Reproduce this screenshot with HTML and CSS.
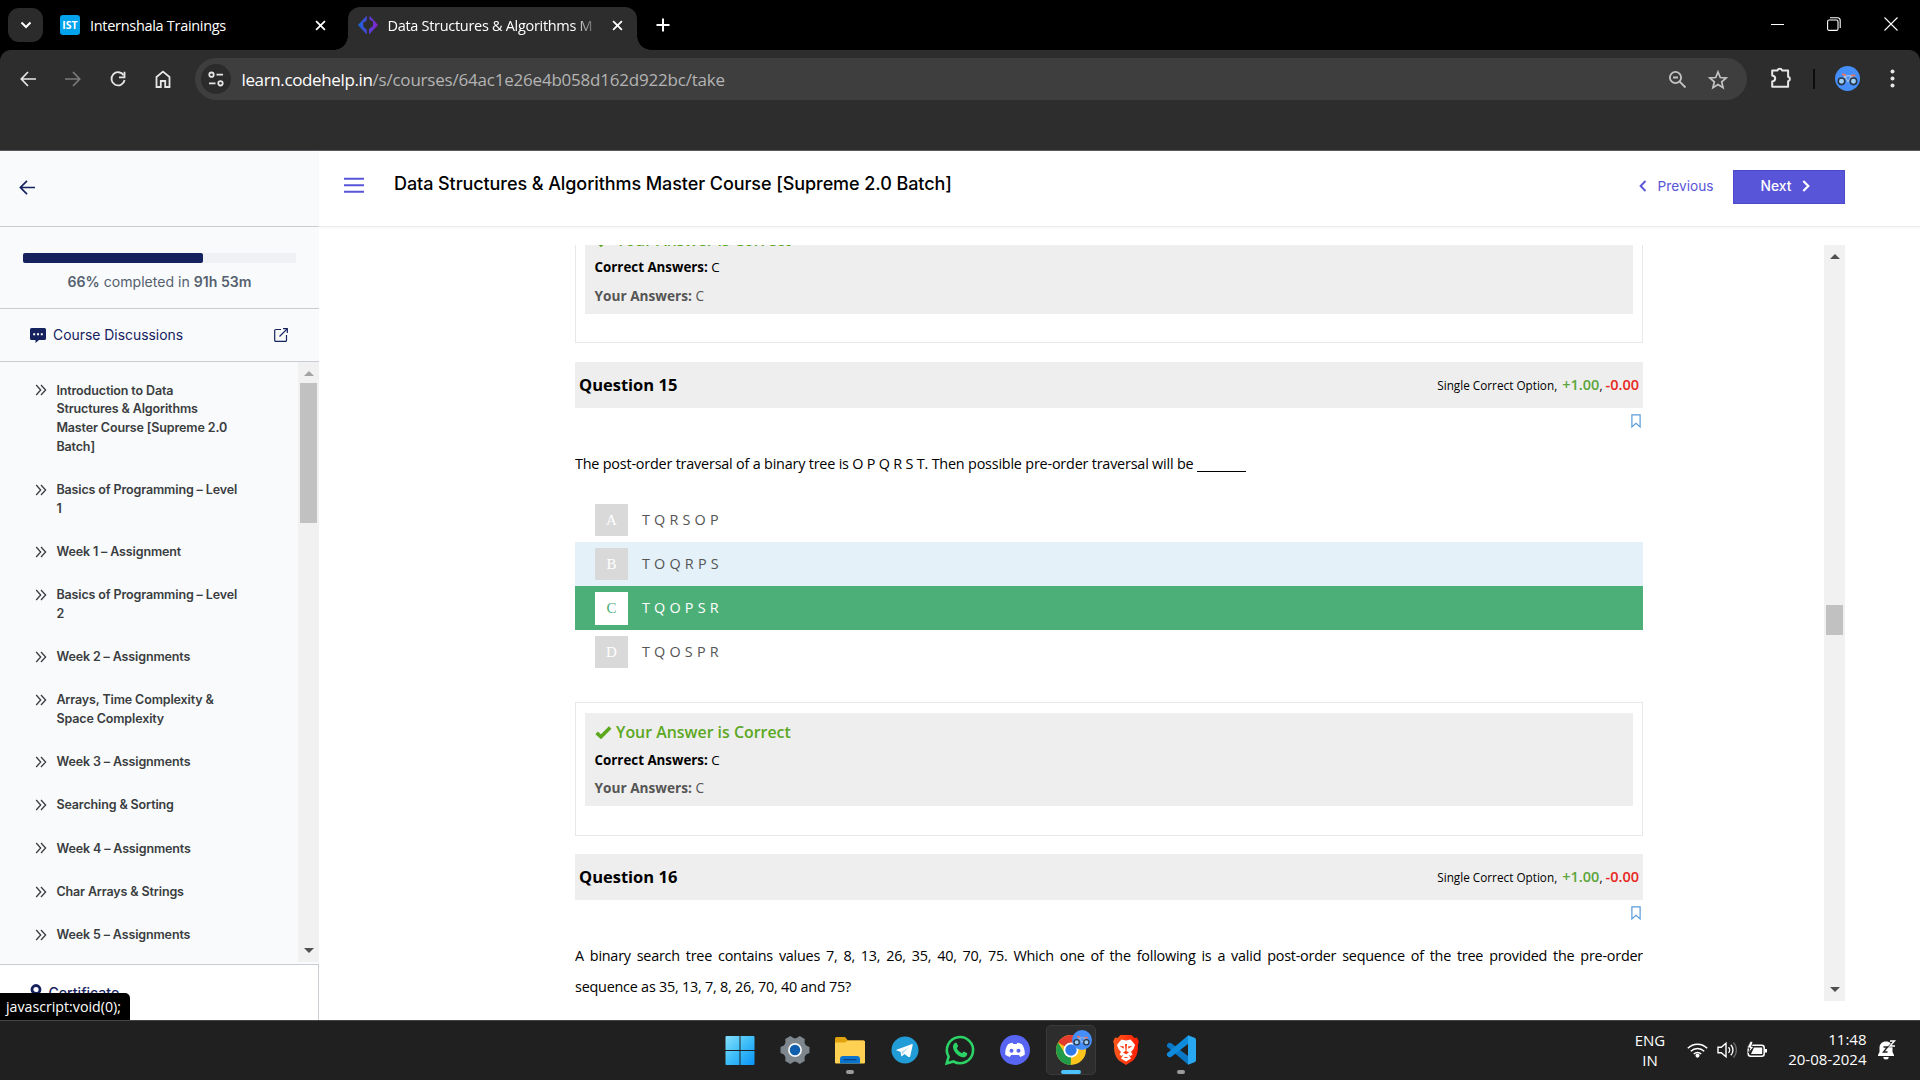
FILE: index.html
```html
<!DOCTYPE html>
<html lang="en">
<head>
<meta charset="utf-8">
<title>Data Structures &amp; Algorithms Master Course</title>
<link rel="stylesheet" href="styles.css">
</head>
<body>
<svg class="defs" width="0" height="0">
  <symbol id="chev2" viewBox="0 0 12 12"><path d="M1.2 1 5.7 6 1.2 11M6 1l4.6 5L6 11" fill="none" stroke="#3a3d40" stroke-width="1.3"/></symbol>
  <symbol id="close" viewBox="0 0 10 10"><path d="M1 1l8 8M9 1 1 9" fill="none" stroke="currentColor" stroke-width="1.600"/></symbol>
  <symbol id="bookmark" viewBox="0 0 10 14"><path d="M.9.9h8.2v12L5 9.3.9 12.9z" fill="none" stroke="#5a9bd8" stroke-width="1.2"/></symbol>
  <symbol id="up" viewBox="0 0 10 5"><path d="M0 5 5 0l5 5z" fill="currentColor"/></symbol>
  <symbol id="down" viewBox="0 0 10 5"><path d="M0 0h10L5 5z" fill="currentColor"/></symbol>
  <symbol id="check" viewBox="0 0 17 13"><path d="M1.6 6.8 6 10.8 15.2 1.6" fill="none" stroke="#5ba81f" stroke-width="3.6"/></symbol>
  <symbol id="bike" viewBox="0 0 20 14"><g fill="none"><path d="M4.500 9.500 7.500 4.500l3 5.500L14 4.500M7.500 4.500h6.500l1.700 5" stroke="#a9c4e6" stroke-width="1"/><circle cx="4.300" cy="9.700" r="3.100" fill="#9fd0fa" stroke="#283548" stroke-width="1.500"/><circle cx="15.700" cy="9.700" r="3.100" fill="#9fd0fa" stroke="#283548" stroke-width="1.500"/><path d="M4.800 2.800 8.500 3.800M13.500 4h4" stroke="#f2735a" stroke-width="1.700"/></g></symbol>
</svg>

<header class="browser">
  <div class="tabs">
    <div class="tab-search"><svg width="12" height="8" viewBox="0 0 12 8"><path d="M1.500 1.500 6 6l4.500-4.500" fill="none" stroke="#fff" stroke-width="2"/></svg></div>
    <div class="tab">
      <span class="ist">IST</span>
      <span class="tab-title">Internshala Trainings</span>
      <svg class="x" width="11" height="11"><use href="#close"/></svg>
    </div>
    <div class="tab active">
      <svg width="20" height="20" viewBox="0 0 20 20"><defs><linearGradient id="cg"><stop stop-color="#1667d9"/><stop offset="1" stop-color="#8a1fd0"/></linearGradient></defs><path d="M9 .5 0 10l8.800 9.500V15L5.300 11.500V7.500L8.500 6zM11.500.5 20 10l-9 9.500V14l4-3V6.500l-3.500-2z" fill="url(#cg)"/></svg>
      <span class="tab-title fade">Data Structures &amp; Algorithms M</span>
      <svg class="x" width="11" height="11"><use href="#close"/></svg>
    </div>
    <svg class="plus" width="14" height="14" viewBox="0 0 14 14"><path d="M7 .5v13M.5 7h13" stroke="#fff" stroke-width="2"/></svg>
    <div class="win-controls">
      <svg width="13" height="14" viewBox="0 0 13 14"><path d="M0 7.500h13" stroke="#fff"/></svg>
      <svg width="14" height="14" viewBox="0 0 14 14" fill="none" stroke="#fff" stroke-width="1.100"><rect x=".6" y="3" width="10.400" height="10.400" rx="1.500"/><path d="M3 .8h7.500a2.700 2.700 0 0 1 2.700 2.700V11"/></svg>
      <svg width="14" height="14" viewBox="0 0 14 14"><path d="M.5.5l13 13M13.500.5l-13 13" stroke="#fff" stroke-width="1.100"/></svg>
    </div>
  </div>
  <div class="toolbar">
    <div class="nav">
      <svg width="16" height="16" viewBox="0 0 16 16" fill="none" stroke="#e6e6e6" stroke-width="1.700"><path d="M16 8H1.500M8 1 1.300 8 8 15"/></svg>
      <svg width="16" height="16" viewBox="0 0 16 16" fill="none" stroke="#7b7b7b" stroke-width="1.700"><path d="M0 8h14.500M8 1l6.700 7L8 15"/></svg>
      <svg width="16" height="16" viewBox="0 0 16 16" fill="none" stroke="#e6e6e6" stroke-width="1.800"><path d="M13.700 4.300A6.600 6.600 0 1 0 14.600 9"/><path d="M14.500.8v5.500H9"/></svg>
      <svg width="16" height="18" viewBox="0 0 16 18" fill="none" stroke="#e6e6e6" stroke-width="1.800"><path d="M1.500 7 8 1.600 14.500 7v10h-4.300v-6H5.800v6H1.500z"/></svg>
    </div>
    <div class="omnibox">
      <span class="site"><svg width="16" height="16" viewBox="0 0 16 16" fill="none" stroke="#e6e6e6" stroke-width="1.800"><circle cx="3.500" cy="3.700" r="2.200"/><path d="M8.500 3.700H15M1 12.300h6.500"/><circle cx="12.500" cy="12.300" r="2.200"/></svg></span>
      <span class="url"><b>learn.codehelp.in</b>/s/courses/64ac1e26e4b058d162d922bc/take</span>
      <svg class="zoom" width="19" height="19" viewBox="0 0 19 19" fill="none" stroke="#c4c4c4" stroke-width="1.800"><circle cx="7.500" cy="7.500" r="5.600"/><path d="M11.700 11.700 17.500 17.500M5 7.500h5"/></svg>
      <svg class="star" width="20" height="19" viewBox="0 0 20 19" fill="none" stroke="#c4c4c4" stroke-width="1.700"><path d="M10 2l2.300 5.500 5.900.5-4.500 3.900 1.400 5.800-5.100-3.100-5.100 3.100 1.400-5.800L1.800 8l5.900-.5z"/></svg>
    </div>
    <svg class="ext" width="22" height="22" viewBox="0 0 22 22"><path d="M2.200 3.500h5.300a2.400 2.400 0 0 1 4.600 0h6v6.200a2.300 2.300 0 0 1 0 4.500v5.500H2.200v-5.200c4-.6 4-5.400 0-6z" fill="none" stroke="#e6e6e6" stroke-width="2" stroke-linejoin="round"/></svg>
    <i class="sep"></i>
    <span class="avatar"><svg width="21" height="15"><use href="#bike"/></svg></span>
    <svg class="dots" width="5" height="19" viewBox="0 0 5 19" fill="#e6e6e6"><circle cx="2.500" cy="2.500" r="2"/><circle cx="2.500" cy="9.500" r="2"/><circle cx="2.500" cy="16.500" r="2"/></svg>
  </div>
</header>

<div class="page">
  <aside class="sidebar">
    <div class="side-top"><svg width="16" height="15" viewBox="0 0 16 15" fill="none" stroke="#16225e" stroke-width="1.700"><path d="M16 7.500H1.500M8 .8 1.400 7.500 8 14.200"/></svg></div>
    <div class="progress">
      <div class="bar"><div class="fill" style="width:66%"></div></div>
      <p><b>66%</b> completed in <b>91h 53m</b></p>
    </div>
    <div class="discussions">
      <svg width="16" height="15" viewBox="0 0 16 15"><path d="M1.500 0h13A1.500 1.500 0 0 1 16 1.500v9a1.500 1.500 0 0 1-1.500 1.500H9l-3.500 3V12h-4A1.500 1.500 0 0 1 0 10.500v-9A1.500 1.500 0 0 1 1.500 0z" fill="#16225e"/><path d="M3.200 5.200h2v2h-2zM7 5.200h2v2H7zM10.800 5.200h2v2h-2z" fill="#fff"/></svg>
      <span>Course Discussions</span>
      <svg width="14" height="14" viewBox="0 0 14 14" fill="none" stroke="#16225e" stroke-width="1.200"><path d="M7 1.500H1.800a1.100 1.100 0 0 0-1.100 1.100v9.600a1.100 1.100 0 0 0 1.100 1.100h9.600a1.100 1.100 0 0 0 1.100-1.100V7M9 .7h4.300V5M13.200.8 5.500 8.500"/></svg>
    </div>
    <div class="side-scroll">
      <ul class="topics">
        <li><svg><use href="#chev2"/></svg><span>Introduction to Data<br>Structures &amp; Algorithms<br>Master Course [Supreme 2.0<br>Batch]</span></li>
        <li><svg><use href="#chev2"/></svg><span>Basics of Programming – Level<br>1</span></li>
        <li><svg><use href="#chev2"/></svg><span>Week 1 – Assignment</span></li>
        <li><svg><use href="#chev2"/></svg><span>Basics of Programming – Level<br>2</span></li>
        <li><svg><use href="#chev2"/></svg><span>Week 2 – Assignments</span></li>
        <li><svg><use href="#chev2"/></svg><span>Arrays, Time Complexity &amp;<br>Space Complexity</span></li>
        <li><svg><use href="#chev2"/></svg><span>Week 3 – Assignments</span></li>
        <li><svg><use href="#chev2"/></svg><span>Searching &amp; Sorting</span></li>
        <li><svg><use href="#chev2"/></svg><span>Week 4 – Assignments</span></li>
        <li><svg><use href="#chev2"/></svg><span>Char Arrays &amp; Strings</span></li>
        <li><svg><use href="#chev2"/></svg><span>Week 5 – Assignments</span></li>
      </ul>
      <div class="scrollbar side-bar">
        <svg class="muted" width="10" height="5"><use href="#up"/></svg>
        <i></i>
        <svg width="10" height="5"><use href="#down"/></svg>
      </div>
    </div>
    <div class="certificate">
      <svg width="12" height="16" viewBox="0 0 12 16"><circle cx="6" cy="5.500" r="4" fill="none" stroke="#16225e" stroke-width="2.800"/><path d="M2.500 9.500v6L6 13.500l3.500 2v-6z" fill="#16225e"/></svg>
      <span>Certificate</span>
    </div>
  </aside>

  <main class="main">
    <div class="course-head">
      <svg class="burger" width="20" height="17" viewBox="0 0 20 17" stroke="#5955d9" stroke-width="1.900"><path d="M0 1.800h20M0 8.300h20M0 14.800h20"/></svg>
      <h1>Data Structures &amp; Algorithms Master Course [Supreme 2.0 Batch]</h1>
      <span class="prev"><svg width="8" height="12" viewBox="0 0 8 12"><path d="M6.500 1 1.600 6l4.900 5" fill="none" stroke="#5955d9" stroke-width="1.900"/></svg>Previous</span>
      <span class="next">Next<svg width="8" height="12" viewBox="0 0 8 12"><path d="M1.300 1l5 5-5 5" fill="none" stroke="#fff" stroke-width="2.200"/></svg></span>
    </div>
    <div class="viewer">
      <div class="quiz">
        <section class="result first">
          <div class="result-body">
            <p class="verdict"><svg width="17" height="13"><use href="#check"/></svg>Your Answer is Correct</p>
            <p class="right"><b>Correct Answers:</b> C</p>
            <p class="yours"><b>Your Answers:</b> C</p>
          </div>
        </section>
        <div class="q-head"><h2>Question 15</h2><p>Single Correct Option, <b class="plus-mark">+1.00</b>, <b class="minus-mark">-0.00</b></p></div>
        <div class="mark"><svg width="10" height="14"><use href="#bookmark"/></svg></div>
        <p class="stem">The post-order traversal of a binary tree is O P Q R S T. Then possible pre-order traversal will be <u class="blank"></u></p>
        <ol class="options">
          <li><i>A</i><span>T Q R S O P</span></li>
          <li class="hover"><i>B</i><span>T O Q R P S</span></li>
          <li class="chosen"><i>C</i><span>T Q O P S R</span></li>
          <li><i>D</i><span>T Q O S P R</span></li>
        </ol>
        <section class="result">
          <div class="result-body">
            <p class="verdict"><svg width="17" height="13"><use href="#check"/></svg>Your Answer is Correct</p>
            <p class="right"><b>Correct Answers:</b> C</p>
            <p class="yours"><b>Your Answers:</b> C</p>
          </div>
        </section>
        <div class="q-head"><h2>Question 16</h2><p>Single Correct Option, <b class="plus-mark">+1.00</b>, <b class="minus-mark">-0.00</b></p></div>
        <div class="mark"><svg width="10" height="14"><use href="#bookmark"/></svg></div>
        <p class="stem tight">A binary search tree contains values 7, 8, 13, 26, 35, 40, 70, 75. Which one of the following is a valid post-order sequence of the tree provided the pre-order <span class="keep">sequence as 35, 13, 7, 8, 26, 70, 40 and 75?</span></p>
      </div>
      <div class="scrollbar main-bar">
        <svg width="10" height="5"><use href="#up"/></svg>
        <i></i>
        <svg width="10" height="5"><use href="#down"/></svg>
      </div>
    </div>
  </main>
  <div class="status">javascript:void(0);</div>
</div>

<footer class="taskbar">
  <div class="apps">
    <span class="app"><svg width="30" height="30" viewBox="0 0 30 30"><defs><linearGradient id="wg" x2="1" y2="1"><stop stop-color="#86dffb"/><stop offset=".5" stop-color="#3cbdf8"/><stop offset="1" stop-color="#0a93f5"/></linearGradient></defs><path d="M.5 2a1 1 0 0 1 1-1h13v14H.5zM15.500 1h13a1 1 0 0 1 1 1v13h-14zM.5 16h14v14h-13a1 1 0 0 1-1-1zM15.500 16h14v13a1 1 0 0 1-1 1h-13z" fill="url(#wg)"/></svg></span>
    <span class="app"><svg width="30" height="30" viewBox="1 1 28 28"><g fill="#7e868e"><circle cx="15" cy="15" r="11"/><path id="tooth" d="M10.500 5 12.300 1.500h5.400L19.500 5v20l-1.800 3.500h-5.400L10.500 25z" transform="rotate(30 15 15)"/><use href="#tooth" transform="rotate(60 15 15)"/><use href="#tooth" transform="rotate(120 15 15)"/></g><circle cx="15" cy="15" r="5.700" fill="#0f5fae" stroke="#f2f5f8" stroke-width="1.600"/></svg></span>
    <span class="app run"><svg width="30" height="27" viewBox="0 0 30 27"><path d="M0 1.500A1.500 1.500 0 0 1 1.500 0H10l3 3.500h15.500A1.500 1.500 0 0 1 30 5v6H0z" fill="#e0a30d"/><path d="M0 5.500h10L13 3.500h15.500A1.500 1.500 0 0 1 30 5v20.500a1 1 0 0 1-1 1H1a1 1 0 0 1-1-1z" fill="#ffd152"/><path d="M5 26.500V22a3 3 0 0 1 3-3h14a3 3 0 0 1 3 3v4.500z" fill="#0b74cf"/><path d="M8.500 22.700h13" stroke="#06427e" stroke-width="1.200"/></svg></span>
    <span class="app"><svg width="28" height="28" viewBox="0 0 28 28"><circle cx="14" cy="14" r="13.500" fill="#229cd6"/><path d="M5.500 13.800 20.500 8.200c.9-.3 1.300.2 1.100 1.200l-2.400 10.800c-.2.900-.9 1.100-1.700.7l-4-3-2.200 2.200c-.6.500-1 .2-1.100-.7l-.7-3.700-4-1.300z" fill="#fff"/><path d="M10.500 15.700 18 11l-5.700 6-.6 2.500z" fill="#b8d8ea"/></svg></span>
    <span class="app"><svg width="30" height="30" viewBox="0 0 30 30"><path d="M1.700 28.300 3.600 21.600A13.100 13.100 0 1 1 8.500 26.500z" fill="none" stroke="#2bd366" stroke-width="2.600"/><path d="M10.800 7.700c.7 0 .9.200 1.100.7l1.200 2.700c.1.700-.8 1.400-1.300 2.100.9 2.200 2.800 3.900 5.200 5 .6-.5 1.300-1.700 1.900-1.700l3 1.500c.4.200.4 1 .1 1.900-1 2.100-3.200 2.700-5.600 2C12 20.600 8.600 16.400 8.100 12.800c-.4-2.500 1-5.100 2.700-5.100z" fill="#2bd366"/></svg></span>
    <span class="app"><svg width="30" height="30" viewBox="0 0 30 30"><circle cx="15" cy="15" r="15" fill="#5865f2"/><path d="M8 9.200a15 15 0 0 1 4.600-1.500l.7 1.300h3.400l.7-1.300A15 15 0 0 1 22 9.200c2.500 3.600 3 7.200 2.700 10.500a14 14 0 0 1-4.500 2.200l-1.300-2h-7.800l-1.300 2a14 14 0 0 1-4.500-2.200C5 16 5.700 12.500 8 9.200z" fill="#fff"/><circle cx="11.500" cy="15.700" r="2" fill="#5865f2"/><circle cx="18.500" cy="15.700" r="2" fill="#5865f2"/></svg></span>
    <span class="app current"><svg width="30" height="30" viewBox="0 0 30 30"><circle cx="15" cy="15" r="15" fill="#fcc41c"/><path d="M15 15 2 7.500A15 15 0 0 1 28 7.500L15 8z" fill="#e33b2e"/><path d="M2 7.500 9 18.500l6 3L14.800 30A15 15 0 0 1 2 7.500z" fill="#229b49"/><circle cx="15" cy="15" r="7.500" fill="#fff"/><circle cx="15" cy="15" r="5.700" fill="#2f78ea"/></svg><span class="badge"><svg width="17" height="12"><use href="#bike"/></svg></span></span>
    <span class="app"><svg width="26" height="30" viewBox="0 0 26 30"><defs><linearGradient id="bg"><stop stop-color="#ff5a1c"/><stop offset="1" stop-color="#ff1d05"/></linearGradient></defs><path d="M7.500 0h11l3 3 2.500-.5 1.800 4-1 3.500c.6 5-.8 12-4.800 15.500L13 30l-7-4.500C2 22 .6 15 1.200 10l-1-3.500L2 2.500 4.500 3z" fill="url(#bg)"/><path d="M13 5.500 17.500 4.500 21 8.500 22 10l-1.500 4-2.500 3 1.500 2.500-2 1.500L15.500 19.500 18 23.500l-5 3-5-3 2.500-4L8.500 21l-2-1.500L8 17l-2.500-3L4 10l1-1.500 3.500-4z" fill="#fff"/><path d="M6.500 10.800l4.500.8-.5 2.200zM19.500 10.800l-4.500.8.5 2.200zM12 9h2l-.5 7 2.500 1.500-3 1.800-3-1.800 2.500-1.500zM10.500 22l2.500 1.200 2.500-1.200" fill="#ff3a10"/></svg></span>
    <span class="app run"><svg width="30" height="30" viewBox="0 0 30 30"><path d="M1 9.500 3 7.800l2 .2L22 21v8.500L.8 11.500z" fill="#0a78c4"/><path d="M1 20.500l2 1.700 2-.2L22 9V.5L.8 18.500z" fill="#0f8bdc"/><path d="M22 .2l6.500 2.600A2 2 0 0 1 30 4.800v20.400a2 2 0 0 1-1.500 2L22 29.800z" fill="#29a8f2"/></svg></span>
  </div>
  <div class="tray">
    <span class="lang">ENG<br>IN</span>
    <svg class="wifi" width="21" height="16" viewBox="0 0 21 16" fill="none" stroke="#fff" stroke-width="1.500"><path d="M.8 6.300a13.700 13.700 0 0 1 19.400 0M3.800 9.200a9.500 9.500 0 0 1 13.400 0M6.800 12a5.200 5.200 0 0 1 7.400 0"/><circle cx="10.500" cy="13.600" r="1.300" fill="#fff"/></svg>
    <svg class="vol" width="21" height="18" viewBox="0 0 21 18" fill="none" stroke="#fff" stroke-width="1.400"><path d="M1 6.300h3.300L9 2.200v13.600l-4.700-4.100H1zM11.500 6.200a4 4 0 0 1 0 5.600M13.800 3.800a7.300 7.300 0 0 1 0 10.400"/><path d="M16.300 1.500a10.600 10.600 0 0 1 0 15" stroke="#666"/></svg>
    <svg class="bat" width="21" height="17" viewBox="0 0 21 17"><rect x="1.200" y="4.200" width="16" height="11" rx="2.500" fill="none" stroke="#fff" stroke-width="1.500"/><path d="M7 6.500h8.200v6.500H4z" fill="#fff"/><path d="M19 8v3.500" stroke="#fff" stroke-width="2"/><path d="M3.500 0 0 7h3L1.500 12 7 5.500H4.500L6 1z" fill="#fff" stroke="#202020" stroke-width=".8"/></svg>
    <span class="clock">11:48<br>20-08-2024</span>
    <span class="bell"><svg width="18" height="20" viewBox="0 0 18 20"><path d="M8 1.500c4 0 6.500 2.500 6.500 6.500v4l1.500 3v1H0v-1l1.500-3V8c0-4 2.500-6.500 6.500-6.500zM5.300 17h5.400a2.700 2.500 0 0 1-5.400 0z" fill="#fff"/><path d="M5.500 7h4l-4 5h4" fill="none" stroke="#202020" stroke-width="1.400"/><path d="M12 1h4.500l-4.500 5H17" fill="none" stroke="#202020" stroke-width="2.600"/><path d="M12 1h4.500l-4.500 5H17" fill="none" stroke="#fff" stroke-width="1.400"/></svg></span>
  </div>
</footer>
</body>
</html>
```
FILE: styles.css
```css
* { box-sizing: border-box; margin: 0; padding: 0; }
body { width: 1920px; height: 1080px; overflow: hidden; display: flex; flex-direction: column; background: #fff; font-family: "Open Sans", sans-serif; font-size: 14.4px; color: #000; }
.defs { position: absolute; }
svg { display: block; flex: none; overflow: visible; }
ul, ol { list-style: none; }

/* Browser chrome */
.browser { height: 151px; flex: none; background: #000; border-bottom: 1px solid #5c595e; }
.tabs { height: 50px; display: flex; align-items: flex-start; padding: 7px 0 0 8px; color: #fff; }
.tab-search { width: 35px; height: 34px; margin-top: 1px; border-radius: 11px; background: #2b2b2b; display: flex; align-items: center; justify-content: center; }
.tab { height: 36px; width: 289px; display: flex; align-items: center; padding-left: 10px; }
.tab:not(.active) { margin-left: 7px; }
.tab-title { width: 210px; margin-left: 10px; font-size: 14.5px; letter-spacing: -0.3px; white-space: nowrap; }
.tab .x { margin-left: 14.5px; }
.fade { margin-left: 9.5px; -webkit-mask-image: linear-gradient(90deg, #000 185px, transparent 212px); mask-image: linear-gradient(90deg, #000 185px, transparent 212px); }
.ist { width: 20px; height: 20px; border-radius: 3px; background: #00a3ec; font: 700 10.5px/20px "Open Sans", sans-serif; text-align: center; }
.tab.active { position: relative; margin-left: 9px; height: 43px; padding-bottom: 7px; background: #2d2d2d; border-radius: 12px 12px 0 0; }
.tab.active::before, .tab.active::after { content: ""; position: absolute; bottom: 0; width: 14px; height: 14px; }
.tab.active::before { left: -14px; background: radial-gradient(circle at 0 0, transparent 13.5px, #2d2d2d 14px); }
.tab.active::after { right: -14px; background: radial-gradient(circle at 100% 0, transparent 13.5px, #2d2d2d 14px); }
.plus { margin: 11px 0 0 18.5px; }
.win-controls { margin: 10px 22px 0 auto; display: flex; gap: 43px; }
.toolbar { height: 100px; background: #2d2d2d; border-radius: 11px 11px 0 0; display: flex; align-items: flex-start; padding-top: 8px; }
.nav { width: 195px; height: 41px; display: flex; align-items: center; gap: 29px; padding-left: 19.5px; }
.omnibox { width: 1552px; height: 42px; border-radius: 21px; background: #3e3e3e; display: flex; align-items: center; padding-left: 6px; }
.site { width: 30px; height: 30px; border-radius: 50%; background: #2b2b2b; display: flex; align-items: center; justify-content: center; }
.url { margin-left: 10.5px; font-size: 17px; letter-spacing: -0.21px; color: #b4b4b4; }
.url b { font-weight: 400; color: #fff; letter-spacing: -0.37px; }
.zoom { margin: 0 21px 0 auto; }
.star { margin-right: 19px; }
.ext { margin: 9px 0 0 23px; }
.sep { width: 2px; height: 20px; background: #0c0c0c; margin: 11px 0 0 21px; }
.avatar { width: 25px; height: 25px; margin: 8px 0 0 20px; border-radius: 50%; background: #468ef7; display: flex; align-items: center; justify-content: center; }
.dots { margin: 11px 0 0 30px; }

/* Page */
.page { height: 869px; flex: none; display: flex; position: relative; overflow: hidden; }
.sidebar { width: 319px; background: #f8fafc; display: flex; flex-direction: column; font-family: Inter, sans-serif; color: #16225e; }
.side-top { height: 76px; flex: none; border-bottom: 1px solid #c9cdd1; padding: 29px 0 0 19px; }
.progress { height: 82px; flex: none; border-bottom: 1px solid #c9cdd1; padding: 26px 23px 0; }
.bar { height: 10px; background: #eff1f5; border-radius: 2px; }
.fill { height: 10px; background: #16225e; border-radius: 2px; }
.progress p { margin-top: 9px; line-height: 20px; font-size: 14.1px; text-align: center; color: #55606e; }
.progress b { font-weight: 600; }
.discussions { height: 53px; flex: none; border-bottom: 1px solid #c9cdd1; display: flex; align-items: center; padding: 0 31px 0 30px; font-size: 13.9px; }
.discussions span { margin: 0 auto 0 7px; }
.side-scroll { height: 600px; flex: none; display: flex; justify-content: space-between; }
.topics { padding: 19.6px 0 0 35px; }
.topics li { display: flex; gap: 9.4px; margin-bottom: 24.52px; font-size: 12.5px; font-weight: 600; line-height: 18.7px; letter-spacing: -0.13px; color: #3a3d40; white-space: nowrap; }
.topics svg { width: 12px; height: 12px; margin-top: 2.8px; }
.scrollbar { width: 21px; background: #f1f1f1; display: flex; flex-direction: column; align-items: center; color: #505050; }
.scrollbar .muted { color: #a3a3a3; }
.scrollbar i { width: 17px; background: #c1c1c1; }
.scrollbar svg { margin: 9px 0 7px; }
.scrollbar svg:last-child { margin-top: auto; margin-bottom: 9px; }
.side-bar i { height: 140px; }
.certificate { margin-top: 2px; height: 56px; background: #fff; border: 1px solid #c9cdd1; border-width: 1px 1px 0 0; display: flex; padding: 19px 0 0 29.5px; gap: 7px; font-size: 14.1px; font-weight: 500; line-height: 17px; }
.status { position: absolute; left: 0; bottom: 0; width: 130px; height: 27px; padding-left: 6px; background: #000; color: #fff; border-radius: 0 5px 0 0; font-size: 14.2px; line-height: 27px; }

.main { flex: 1; display: flex; flex-direction: column; }
.course-head { height: 76px; flex: none; border-bottom: 1px solid #ededed; box-shadow: 0 1px 2px #f6f6f6; display: flex; align-items: flex-start; padding: 19px 75px 0 25px; font-family: Inter, sans-serif; color: #5955d9; }
.burger { margin-top: 7px; }
h1 { margin: 0 auto 0 30px; font-size: 18px; line-height: 28px; font-weight: 500; letter-spacing: -0.08px; color: #000; }
.prev { display: flex; align-items: center; gap: 10.5px; line-height: 32px; font-size: 13.7px; margin-right: 19.5px; }
.next { width: 112px; height: 34px; background: #5955d9; border: 1px solid #4c49cb; color: #fff; font-weight: 500; font-size: 13.8px; display: flex; align-items: center; padding: 0 0 2px 26.5px; gap: 11px; }
.viewer { height: 756px; margin-top: 18px; padding: 0 75px 0 256px; display: flex; justify-content: space-between; overflow: hidden; }
.quiz { width: 1068px; height: 756px; overflow: hidden; }
.main-bar { height: 756px; }
.main-bar i { height: 30px; margin-top: 339px; }

/* Quiz */
.result { height: 134px; border: 1px solid #e8e8e8; padding: 10px 9px; margin: 28px 0 18px; }
.result.first { margin: -36px 0 19px; }
.result-body { height: 93px; background: #eee; padding: 5px 9.5px; line-height: 28px; }
.result.first .result-body { height: 94px; }
.verdict { display: flex; align-items: center; gap: 4.5px; height: 28px; font-size: 15.9px; font-weight: 600; color: #5ba81f; }
.first .verdict { padding-top: 2px; }
.right { font-size: 13.35px; }
.yours { font-size: 13.65px; color: #555; }
.first .yours { line-height: 29px; }
.q-head { height: 46px; background: #eee; display: flex; align-items: center; justify-content: space-between; padding: 0 4px; }
.q-head h2 { font-size: 16.5px; font-weight: 700; padding-bottom: 2px; }
.q-head p { font-size: 11.75px; line-height: 20px; }
.q-head b { font-size: 14.5px; font-weight: 600; }
.plus-mark { color: #5ba53a; margin-left: 2px; }
.minus-mark { color: #e8281d; }
.mark { height: 40px; padding: 6px 2px 0 0; display: flex; justify-content: flex-end; }
.stem { line-height: 31px; letter-spacing: -0.2px; text-align: justify; }
.stem.tight { letter-spacing: -0.23px; }
.keep { white-space: nowrap; }
.blank { display: inline-block; width: 49px; height: 1px; background: #000; vertical-align: -3px; }
.options { margin-top: 19px; }
.options li { height: 44px; display: flex; align-items: center; padding-left: 20px; letter-spacing: 0.22px; color: #555; }
.options span { padding-bottom: 2px; }
.options i { width: 33px; height: 32px; margin-right: 14px; background: #d9d9d9; color: #fff; font: 15px/32px "Liberation Serif", serif; text-align: center; }
.options .hover { background: #e4f1f9; }
.options .chosen { background: #4caf78; color: #fff; }
.chosen i { background: #fff; color: #4caf78; height: 33px; }

/* Taskbar */
.taskbar { height: 60px; flex: none; background: #202020; border-top: 1px solid #454545; display: flex; align-items: flex-start; color: #fff; padding: 4px 24px 0 714.5px; }
.apps { display: flex; gap: 5.2px; }
.app { position: relative; width: 50px; height: 50px; border-radius: 5px; display: flex; align-items: center; justify-content: center; }
.run::after, .current::after { content: ""; position: absolute; left: 21px; bottom: 1px; width: 8px; height: 4px; border-radius: 2px; background: #9a9a9a; }
.current { background: #2d2d2d; border: 1px solid #3a3a3a; }
.current::after { left: 14px; bottom: 0; width: 20px; background: #4cc2ff; }
.badge { position: absolute; left: 25px; top: 4px; width: 20px; height: 20px; border-radius: 50%; background: #468ef7; display: flex; align-items: center; justify-content: center; }
.tray { margin-left: auto; display: flex; align-items: center; height: 50px; font-size: 15px; line-height: 20px; }
.lang { text-align: center; }
.wifi { margin-left: 22px; }
.vol { margin-left: 9px; }
.bat { margin: 0 0 2px 9px; }
.clock { text-align: right; margin-left: 20px; padding-bottom: 2px; }
.bell { margin-left: 11.5px; }
```
